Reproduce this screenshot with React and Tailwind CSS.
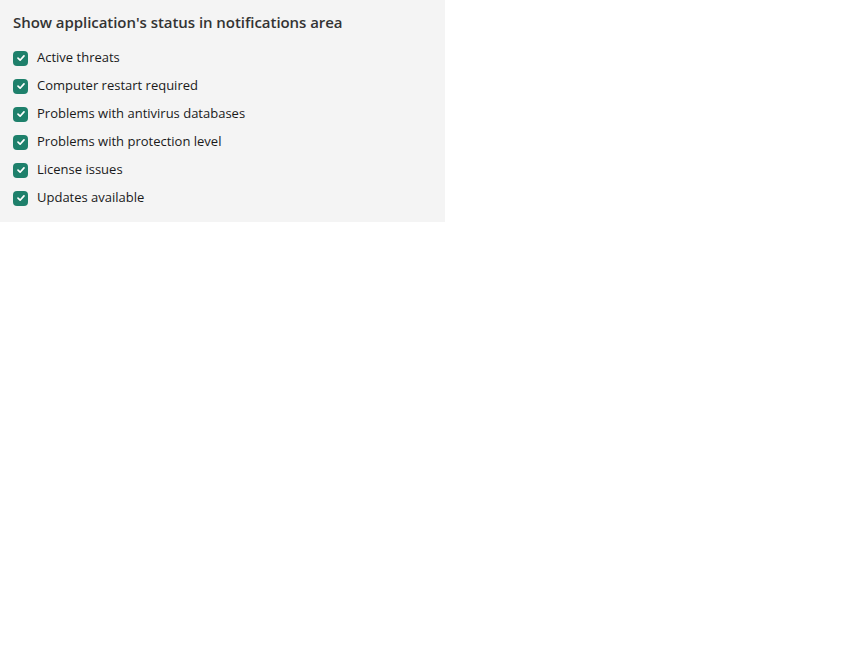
const items = [
  'Active threats',
  'Computer restart required',
  'Problems with antivirus databases',
  'Problems with protection level',
  'License issues',
  'Updates available',
];

function Check() {
  return (
    <span className="flex h-[15px] w-[15px] shrink-0 items-center justify-center rounded-[4px] bg-[#1e806b]">
      <svg width="10" height="10" viewBox="0 0 10 10" fill="none">
        <path d="M2 5.2 L4.1 7.2 L8 2.9" stroke="#fff" strokeWidth="1.7" strokeLinecap="round" strokeLinejoin="round" />
      </svg>
    </span>
  );
}

export default function App() {
  return (
    <div className="min-h-screen bg-white" style={{ fontFamily: '"Open Sans", "Noto Sans", sans-serif' }}>
      <div className="w-[445px] bg-[#f4f4f4] pl-[13px] pt-[11px] pb-[10px]">
        <h2 className="text-[15px] font-semibold leading-[22px] tracking-[-0.05px] text-[#333]">
          Show application's status in notifications area
        </h2>
        <ul className="mt-[11px] flex flex-col">
          {items.map((label) => (
            <li key={label} className="flex h-[28px] items-center gap-[9px]">
              <Check />
              <span className="text-[13px] text-[#1a1a1a]">{label}</span>
            </li>
          ))}
        </ul>
      </div>
    </div>
  );
}
